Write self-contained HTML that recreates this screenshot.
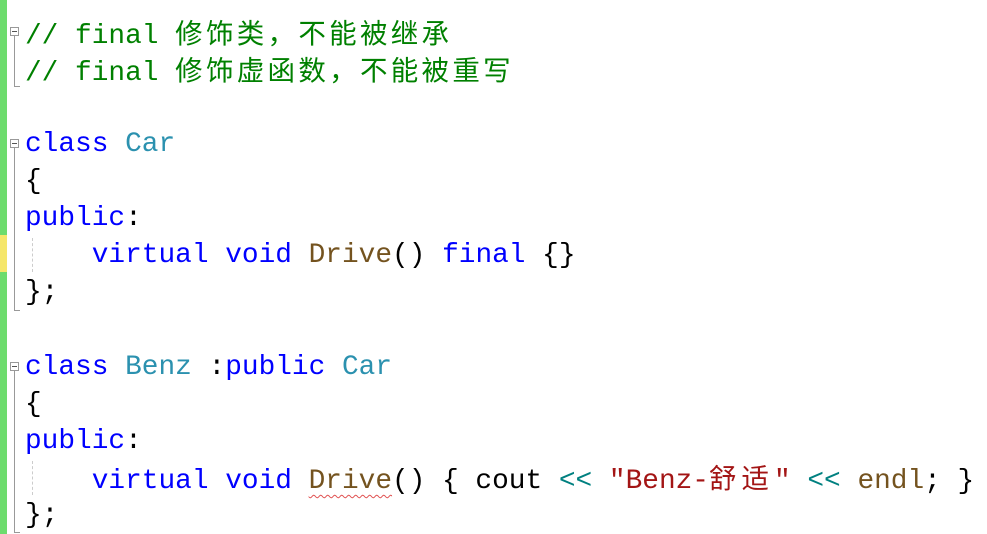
<!DOCTYPE html>
<html><head><meta charset="utf-8"><style>
body{margin:0;width:987px;height:534px;background:#fff;overflow:hidden;position:relative;font-family:"Liberation Mono","Noto Sans CJK SC",monospace;}
.l{position:absolute;left:25px;font-size:27.8px;line-height:37px;white-space:pre;color:#000;}
.c{color:#008000}.k{color:#0000ff}.t{color:#2b91af}.f{color:#74531f}.s{color:#a31515}
.cj{font-family:"Noto Sans CJK SC",sans-serif;letter-spacing:3.3px;font-size:27.5px}
.bar{position:absolute;left:0;width:7px;background:#6ddc6d}
.fold{position:absolute;left:10px;width:9px;height:9px;border:1px solid #999;background:#fff;box-sizing:border-box}
.fold:after{content:"";position:absolute;left:1px;top:3px;width:5px;height:1px;background:#555}
.vl{position:absolute;left:14px;width:1px;background:#999}
.hl{position:absolute;left:14px;width:6px;height:1px;background:#999}
.dot{position:absolute;left:32px;width:0;border-left:1px dashed #ccc}
</style></head><body>
<div class="bar" style="top:0;height:534px"></div>
<div class="bar" style="top:235px;height:37px;background:#f5e66a"></div>
<div class="fold" style="top:27px"></div><div class="vl" style="top:36px;height:50px"></div><div class="hl" style="top:86px"></div>
<div class="fold" style="top:139px"></div><div class="vl" style="top:148px;height:162px"></div><div class="hl" style="top:310px"></div>
<div class="fold" style="top:362px"></div><div class="vl" style="top:371px;height:162px"></div><div class="hl" style="top:532px"></div>
<div class="dot" style="top:238px;height:34px"></div>
<div class="dot" style="top:461px;height:34px"></div>
<div class="l c" style="top:13px">// final <span class="cj">修饰类，不能被继承</span></div>
<div class="l c" style="top:50px">// final <span class="cj">修饰虚函数，不能被重写</span></div>
<div class="l" style="top:126px"><span class="k">class</span> <span class="t">Car</span></div>
<div class="l" style="top:163px">{</div>
<div class="l" style="top:200px"><span class="k">public</span>:</div>
<div class="l" style="top:237px">    <span class="k">virtual</span> <span class="k">void</span> <span class="f">Drive</span>() <span class="k">final</span> {}</div>
<div class="l" style="top:274px">};</div>
<div class="l" style="top:349px"><span class="k">class</span> <span class="t">Benz</span> :<span class="k">public</span> <span class="t">Car</span></div>
<div class="l" style="top:386px">{</div>
<div class="l" style="top:423px"><span class="k">public</span>:</div>
<div class="l" style="top:458px">    <span class="k">virtual</span> <span class="k">void</span> <span class="f" style="text-decoration:underline wavy #e05050;text-underline-offset:6px;text-decoration-thickness:1px">Drive</span>() { cout <span style="color:#008080">&lt;&lt;</span> <span class="s">"Benz-<span class="cj" style="letter-spacing:5px">舒适</span>"</span> <span style="color:#008080">&lt;&lt;</span> <span class="f">endl</span>; }</div>
<div class="l" style="top:497px">};</div>
</body></html>
